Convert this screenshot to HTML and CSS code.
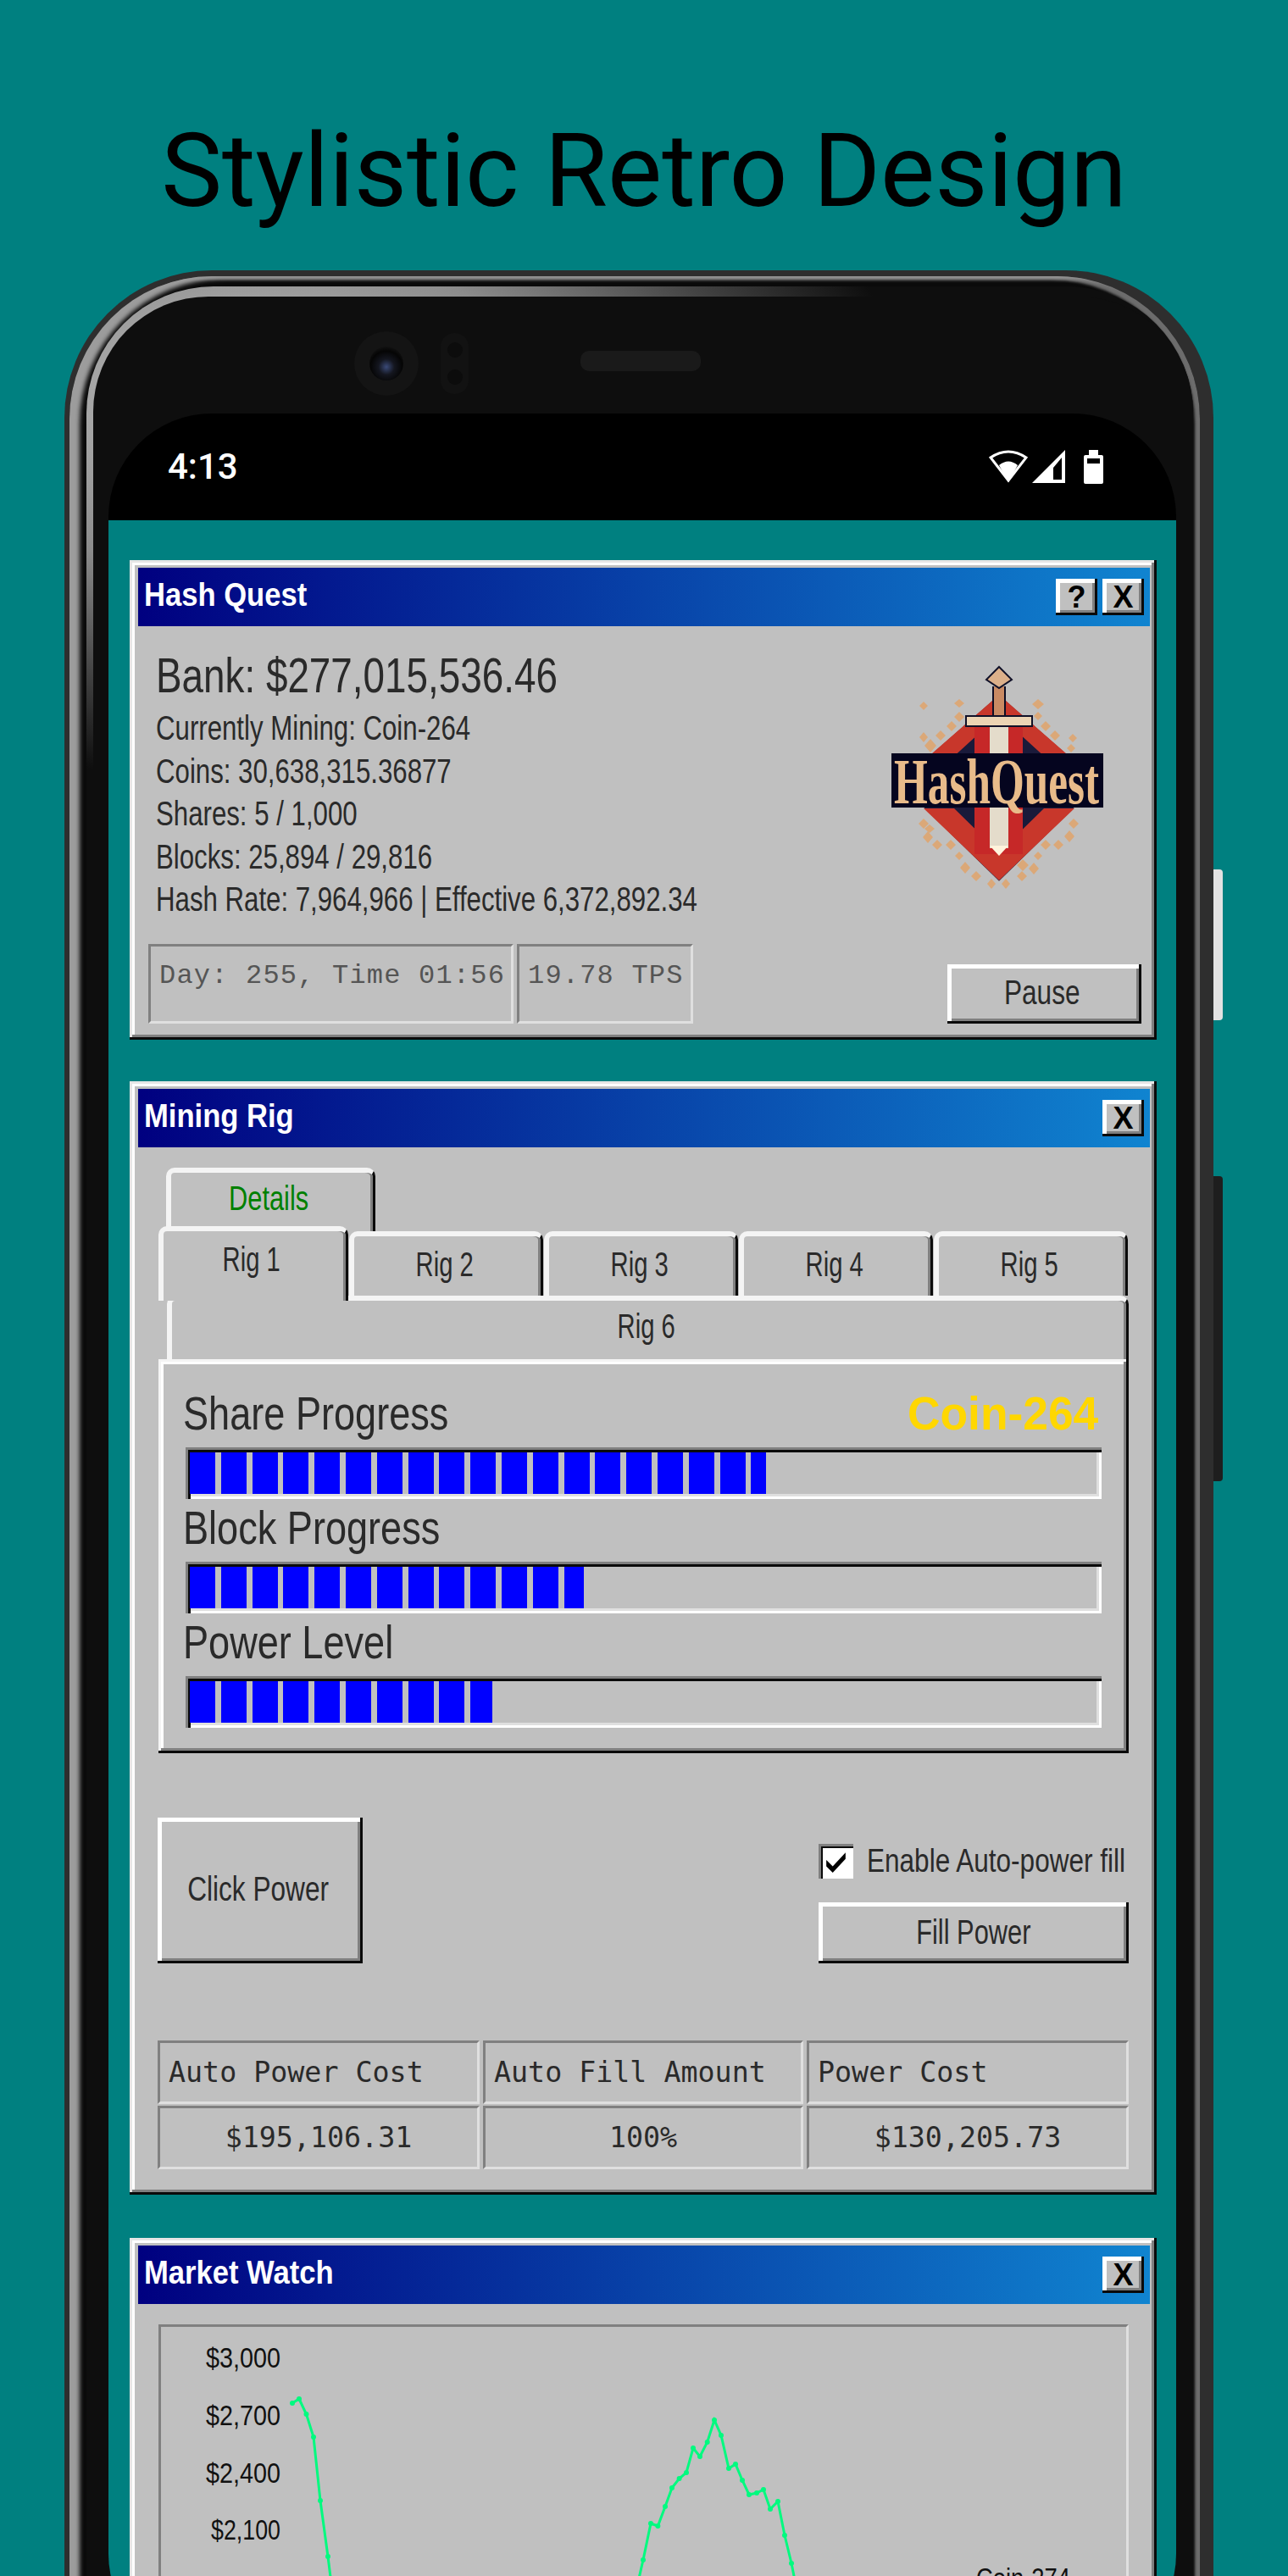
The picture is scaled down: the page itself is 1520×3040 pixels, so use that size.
FILE: index.html
```html
<!DOCTYPE html>
<html>
<head>
  <meta charset="UTF-8">
  <title>Hash Quest</title>
  <link rel="stylesheet" href="styles.css">
</head>
<body>
  <h1 class="headline">Stylistic Retro Design</h1>

  <div class="phone">
    <div class="side-btn power"></div>
    <div class="side-btn volume"></div>
    <div class="rim">
      <div class="lip">
        <div class="bezel">
          <div class="sensors">
            <div class="camera"><div class="lens"></div></div>
            <div class="prox"><span></span><span></span></div>
            <div class="speaker"></div>
          </div>

          <div class="statusbar">
            <span class="clock">4:13</span>
            <div class="status-icons">
              <svg class="ic-wifi" width="46" height="39" viewBox="0 0 46 39">
                <path d="M23 36 L2 9 Q23 -5 44 9 Z" fill="none" stroke="#fff" stroke-width="3"/>
                <path d="M23 38 L12 18 Q23 9 34 18 Z" fill="#fff"/>
              </svg>
              <svg class="ic-signal" width="39" height="39" viewBox="0 0 39 39">
                <path fill-rule="evenodd" d="M0 39 L39 0 V39 Z M25 35 H35 V9 L25 21 Z" fill="#fff"/>
              </svg>
              <svg class="ic-battery" width="23" height="40" viewBox="0 0 23 40">
                <path fill-rule="evenodd" d="M6 0 H17 V6 H21 Q23 6 23 8 V38 Q23 40 21 40 H2 Q0 40 0 38 V8 Q0 6 2 6 H6 Z M4 10 V16 H19 V10 Z" fill="#fff"/>
              </svg>
            </div>
          </div>

          <div class="screen">
            <!-- Hash Quest -->
            <div class="window win-quest">
              <div class="titlebar">
                <span class="title-text">Hash Quest</span>
                <div class="title-btns">
                  <button class="btn title-btn">?</button>
                  <button class="btn title-btn">X</button>
                </div>
              </div>
              <div class="quest-body">
                <div class="quest-top">
                  <div class="stats">
                    <div class="bank"><span class="nar">Bank: $277,015,536.46</span></div>
                    <div class="stat"><span class="nar">Currently Mining: Coin-264</span></div>
                    <div class="stat"><span class="nar">Coins: 30,638,315.36877</span></div>
                    <div class="stat"><span class="nar">Shares: 5 / 1,000</span></div>
                    <div class="stat"><span class="nar">Blocks: 25,894 / 29,816</span></div>
                    <div class="stat"><span class="nar">Hash Rate: 7,964,966 | Effective 6,372,892.34</span></div>
                  </div>
                  <svg class="logo" width="260" height="268" viewBox="70 45 260 268">
                    <g fill="#dba878">
                      <path d="M110 88l5 5-5 5-5-5z"/><path d="M152 85l6 5-6 5-6-5z"/><path d="M245 85l7 6-7 6-7-6z"/>
                      <path d="M245 100l5 5-5 5-5-5z"/><path d="M152 100l6 6-6 6-6-6z"/><path d="M143 111l6 6-6 6-6-6z"/>
                      <path d="M254 111l6 6-6 6-6-6z"/><path d="M130 122l6 6-6 6-6-6z"/><path d="M265 122l6 6-6 6-6-6z"/>
                      <path d="M110 124l5 6-5 6-5-6z"/><path d="M118 132l7 8-7 8-7-8z"/><path d="M286 126l5 5-5 5-5-5z"/>
                      <path d="M284 138l5 5-5 5-5-5z"/><path d="M110 226l6 6-6 6-6-6z"/><path d="M117 233l6 5-6 5-6-5z"/>
                      <path d="M115 241l6 7-6 7-6-7z"/><path d="M126 251l6 6-6 6-6-6z"/><path d="M142 251l6 6-6 6-6-6z"/>
                      <path d="M287 226l6 6-6 6-6-6z"/><path d="M282 240l6 7-6 7-6-7z"/><path d="M269 251l6 6-6 6-6-6z"/>
                      <path d="M254 251l6 6-6 6-6-6z"/><path d="M152 265l5 5-5 5-5-5z"/><path d="M245 265l5 5-5 5-5-5z"/>
                      <path d="M159 277l6 7-6 7-6-7z"/><path d="M227 274l7 7-7 7-7-7z"/><path d="M240 278l6 7-6 7-6-7z"/>
                      <path d="M172 288l6 6-6 6-6-6z"/><path d="M226 288l6 6-6 6-6-6z"/><path d="M190 297l5 6-5 6-5-6z"/><path d="M207 297l5 6-5 6-5-6z"/>
                    </g>
                    <path d="M199 78 L290 158 L290 213 L199 302 L108 213 L108 158 Z" fill="#1a1a3a" transform="translate(199 190) scale(.98) translate(-199 -190)"/>
                    <path d="M199 80 L286 156 H256 L199 104 L142 156 H112 Z" fill="#c8372b"/>
                    <path d="M110 214 H146 L199 266 L252 214 H288 L199 299 Z" fill="#c8372b"/>
                    <rect x="170" y="118" width="57" height="150" fill="#c62828"/>
                    <rect x="188" y="116" width="22" height="145" fill="#e4dccb"/>
                    <path d="M188 258 H210 L199 270 Z" fill="#fff3dc"/>
                    <rect x="191" y="70" width="16" height="37" fill="#0d0d24"/>
                    <rect x="193" y="70" width="12" height="36" fill="#c98a63"/>
                    <path d="M199 47 L214 62 L199 72 L184 62 Z" fill="#dcb08a" stroke="#111128" stroke-width="2"/>
                    <rect x="160" y="105" width="78" height="12" fill="#ecd4b4" stroke="#111128" stroke-width="2"/>
                    <rect x="72" y="149" width="250" height="64" fill="#05051f"/>
                    <text class="logo-text" x="75" y="208" textLength="242" lengthAdjust="spacingAndGlyphs">HashQuest</text>
                  </svg>
                </div>
                <div class="quest-bottom">
                  <div class="clock-box day">Day: 255, Time 01:56</div>
                  <div class="clock-box tps">19.78 TPS</div>
                  <button class="btn pause"><span class="nar-c">Pause</span></button>
                </div>
              </div>
            </div>

            <!-- Mining Rig -->
            <div class="window win-rig">
              <div class="titlebar">
                <span class="title-text">Mining Rig</span>
                <div class="title-btns">
                  <button class="btn title-btn">X</button>
                </div>
              </div>
              <div class="rig-body">
                <div class="tab tab-details"><span class="nar-c">Details</span></div>
                <div class="tab-row">
                  <div class="tab tab-active"><span class="nar-c">Rig 1</span></div>
                  <div class="tab"><span class="nar-c">Rig 2</span></div>
                  <div class="tab"><span class="nar-c">Rig 3</span></div>
                  <div class="tab"><span class="nar-c">Rig 4</span></div>
                  <div class="tab"><span class="nar-c">Rig 5</span></div>
                </div>
                <div class="tab tab-wide"><span class="nar-c">Rig 6</span></div>

                <div class="rig-panel">
                  <div class="bar-label"><span class="nar">Share Progress</span><span class="coin">Coin-264</span></div>
                  <div class="bar"><div class="bar-fill" style="width: 680px"></div></div>
                  <div class="bar-label"><span class="nar">Block Progress</span></div>
                  <div class="bar"><div class="bar-fill" style="width: 465px"></div></div>
                  <div class="bar-label"><span class="nar">Power Level</span></div>
                  <div class="bar"><div class="bar-fill" style="width: 357px"></div></div>
                </div>

                <div class="power-row">
                  <button class="btn click-power"><span class="nar-c">Click Power</span></button>
                  <div class="power-side">
                    <label class="check-row">
                      <span class="checkbox">
                        <svg width="27" height="27" viewBox="0 0 25 25"><path d="M2 11 L9 18 L23 3 V10 L9 25 L2 18 Z" fill="#000"/></svg>
                      </span>
                      <span class="nar check-text">Enable Auto-power fill</span>
                    </label>
                    <button class="btn fill-power"><span class="nar-c">Fill Power</span></button>
                  </div>
                </div>

                <div class="cost-table">
                  <div class="cost-cell head">Auto Power Cost</div>
                  <div class="cost-cell head">Auto Fill Amount</div>
                  <div class="cost-cell head">Power Cost</div>
                  <div class="cost-cell">$195,106.31</div>
                  <div class="cost-cell">100%</div>
                  <div class="cost-cell">$130,205.73</div>
                </div>
              </div>
            </div>

            <!-- Market Watch -->
            <div class="window market">
              <div class="titlebar">
                <span class="title-text">Market Watch</span>
                <div class="title-btns">
                  <button class="btn title-btn">X</button>
                </div>
              </div>
              <div class="market-body">
                <div class="chart-box">
                  <svg class="chart" width="1139" height="420" viewBox="0 0 1139 420">
                    <defs>
                      <marker id="dot" markerUnits="userSpaceOnUse" markerWidth="8" markerHeight="8" refX="4" refY="4">
                        <circle cx="4" cy="4" r="3" fill="#00fa7f"/>
                      </marker>
                    </defs>
                    <g class="axis">
                      <text x="141" y="48" textLength="88" lengthAdjust="spacingAndGlyphs">$3,000</text>
                      <text x="141" y="116" textLength="88" lengthAdjust="spacingAndGlyphs">$2,700</text>
                      <text x="141" y="184" textLength="88" lengthAdjust="spacingAndGlyphs">$2,400</text>
                      <text x="141" y="251" textLength="82" lengthAdjust="spacingAndGlyphs">$2,100</text>
                      <text x="141" y="319" textLength="88" lengthAdjust="spacingAndGlyphs">$1,800</text>
                    </g>
                    <polyline class="price" points="155,90 163,85 171.5,103 180,130 188,205 197,271 206,344 560.5,312 569,275 578,232 586.4,235 595,212 603,190 611.6,179 620,172 628,143 636,153 644.7,136 653,110 661,128 670,167 678,162 686,181 694,198 703,196 711,192 719,215 728,206 736,246 744,279 753,324"/>
                    <text class="legend" x="962" y="308" textLength="111" lengthAdjust="spacingAndGlyphs">Coin-274</text>
                  </svg>
                </div>
              </div>
            </div>
          </div>
        </div>
      </div>
    </div>
  </div>
</body>
</html>
```

FILE: styles.css
```css
html, body {
  margin: 0;
  height: 3040px;
  overflow: hidden;
}
body {
  background-color: #008080;
  font-family: "Liberation Sans", sans-serif;
  color: #2a2a2a;
}
button {
  font-family: inherit;
  color: #2a2a2a;
  border: none;
  padding: 0;
}

.nar, .nar-c {
  display: inline-block;
  white-space: nowrap;
  transform: scaleX(.79);
}
.nar { transform-origin: left center; }
.nar-c { transform-origin: center center; }

/* headline */
.headline {
  margin: 0;
  height: 319px;
  box-sizing: border-box;
  padding-top: 130px;
  text-align: center;
  font-family: Roboto, sans-serif;
  font-weight: 400;
  font-size: 121px;
  line-height: 145px;
  color: #000;
}

/* phone frame */
.phone {
  position: relative;
  margin-left: 76px;
  width: 1356px;
  box-sizing: border-box;
  padding: 7px 16px 0 6px;
  background-color: #2e2e2e;
  border-radius: 174px 174px 0 0;
}
.side-btn {
  position: absolute;
  left: 1356px;
  width: 11px;
  border-radius: 0 4px 4px 0;
}
.side-btn.power {
  top: 707px;
  height: 178px;
  background-color: #e2e2e2;
}
.side-btn.volume {
  top: 1069px;
  height: 360px;
  background-color: #1e1e1e;
}
.rim {
  padding: 12px 8px 0 20px;
  background-color: #0a0a0a;
  border-radius: 168px 168px 0 0;
  box-shadow: inset 15px 6px 5px -3px #9c9c9c, inset -8px 6px 3px -2px #6c6c6c;
}
.lip {
  padding: 12px 0 0 8px;
  border-radius: 150px 150px 0 0;
  background: radial-gradient(ellipse 780px 440px at 14% 5%, #c0c0c0, #8c8c8c 45%, #444 75%, #0e0e0e 100%);
}
.bezel {
  padding: 0 20px 0 18px;
  background-color: #0e0e0e;
  border-radius: 136px 136px 0 0;
  height: 2800px;
}

/* camera and speaker */
.sensors {
  height: 138px;
  box-sizing: border-box;
  display: flex;
  align-items: center;
  padding: 20px 0 0 290px;
}
.camera {
  width: 76px;
  height: 76px;
  border-radius: 50%;
  background-color: #141414;
  display: flex;
  align-items: center;
  justify-content: center;
}
.lens {
  width: 40px;
  height: 40px;
  border-radius: 50%;
  background: radial-gradient(circle at 50% 60%, #3a4a78 0, #14161f 30%, #050505 60%, #222 100%);
}
.prox {
  margin-left: 26px;
  width: 33px;
  height: 72px;
  border-radius: 16px;
  background-color: #121212;
  display: flex;
  flex-direction: column;
  align-items: center;
  justify-content: space-around;
  padding: 4px 0;
  box-sizing: border-box;
}
.prox span {
  width: 18px;
  height: 18px;
  border-radius: 50%;
  background-color: #0c0c0c;
}
.speaker {
  margin: 0 0 6px 132px;
  width: 142px;
  height: 24px;
  border-radius: 10px;
  background-color: #1a1a1a;
}

/* status bar */
.statusbar {
  height: 126px;
  background-color: #000;
  border-radius: 122px 122px 0 0;
  color: #fff;
  display: flex;
  justify-content: space-between;
  padding: 38px 86px 0 70px;
  box-sizing: border-box;
}
.clock {
  font-family: Roboto, sans-serif;
  font-weight: 500;
  font-size: 42px;
  line-height: 50px;
  height: 50px;
}
.status-icons {
  display: flex;
  align-items: flex-start;
  padding-top: 5px;
}
.ic-signal { margin-left: 5px; }
.ic-battery { margin-left: 22px; }

/* screen */
.screen {
  background-color: #008080;
  height: 2520px;
  box-sizing: border-box;
  border-radius: 0 0 120px 120px;
  padding: 47px 23px 0 25px;
}

/* windows */
.window {
  background-color: #c0c0c0;
  padding: 9px 8px 9px 10px;
  box-shadow: inset -3px -3px #0a0a0a, inset 3px 3px #e6e6e6, inset -6px -6px #808080, inset 6px 6px #fff;
}
.win-quest { margin-bottom: 49px; }
.win-rig { margin-bottom: 51px; }
.titlebar {
  height: 69px;
  background: linear-gradient(90deg, #000080, #1084d0);
  display: flex;
  align-items: center;
  justify-content: space-between;
  padding: 0 7px 0 7px;
}
.title-text {
  display: inline-block;
  margin-bottom: 4px;
  color: #fff;
  font-weight: bold;
  font-size: 38px;
  white-space: nowrap;
  transform: scaleX(.91);
  transform-origin: left center;
}
.title-btns {
  display: flex;
  gap: 6px;
}
.btn {
  background-color: #c0c0c0;
  box-shadow: inset -3px -3px #0a0a0a, inset 5px 5px #fff, inset -6px -6px #808080;
}
.title-btn {
  width: 49px;
  height: 43px;
  font-weight: bold;
  font-size: 36px;
  line-height: 40px;
  color: #000;
}

/* hash quest */
.quest-body {
  padding: 0 10px 10px 12px;
}
.quest-top {
  display: flex;
  justify-content: space-between;
  height: 375px;
}
.stats {
  padding: 24px 0 0 9px;
  white-space: nowrap;
}
.bank {
  font-size: 58px;
  line-height: 68px;
  margin-bottom: 3px;
}
.stat {
  font-size: 40px;
  line-height: 50.5px;
}
.stat .nar { transform: scaleX(.78); }
.logo {
  margin: 46px 37px 0 0;
  flex-shrink: 0;
}
.logo-text {
  font-family: "Liberation Serif", serif;
  font-weight: bold;
  font-size: 76px;
  fill: #e8bb8a;
}
.quest-bottom {
  display: flex;
  align-items: flex-end;
  height: 94px;
}
.clock-box {
  height: 94px;
  box-sizing: border-box;
  padding: 17px 0 0 10px;
  font-family: "Liberation Mono", monospace;
  font-size: 32px;
  line-height: 36px;
  letter-spacing: 1.2px;
  color: #555;
  border-top: 3px solid #808080;
  border-left: 3px solid #808080;
  border-right: 3px solid #dfdfdf;
  border-bottom: 3px solid #dfdfdf;
  white-space: nowrap;
}
.day { width: 431px; margin-right: 4px; }
.tps { width: 208px; }
.pause {
  margin-left: auto;
  width: 229px;
  height: 70px;
  padding: 0 6px 4px 0;
  font-size: 40px;
}

/* mining rig */
.rig-body {
  padding: 24px 25px 21px 24px;
}
.tab {
  box-sizing: border-box;
  background-color: #c0c0c0;
  border-top: 6px solid #f4f4f4;
  border-left: 6px solid #f4f4f4;
  border-right: 3px solid #0a0a0a;
  border-radius: 10px 10px 0 0;
  box-shadow: inset -3px 0 #808080;
  height: 76px;
  padding-right: 7px;
  font-size: 40px;
  line-height: 66px;
  text-align: center;
}
.tab .nar-c { transform: scaleX(.73); }
.tab-details {
  margin-left: 9px;
  width: 247px;
  height: 75px;
  color: #008000;
  line-height: 60px;
}
.tab-details .nar-c { transform: scaleX(.77); }
.tab-row {
  display: flex;
  align-items: flex-start;
  height: 76px;
}
.tab-row .tab {
  width: 229px;
  margin-left: 1px;
}
.tab-row .tab-active {
  position: relative;
  z-index: 1;
  width: 224px;
  height: 88px;
  margin: -6px 0 0 0;
}
.tab-wide {
  margin-left: 10px;
  height: 75px;
  line-height: 60px;
}
.rig-panel {
  position: relative;
  z-index: 2;
  height: 465px;
  box-sizing: border-box;
  padding: 30px 32px 30px 29px;
  background-color: #c0c0c0;
  box-shadow: inset -3px -3px #0a0a0a, inset 3px 3px #f4f4f4, inset -6px -6px #808080, inset 6px 6px #fff;
}
.bar-label {
  height: 74px;
  box-sizing: border-box;
  padding-top: 3px;
  font-size: 55px;
  line-height: 62px;
  display: flex;
  justify-content: space-between;
  padding-right: 4px;
}
.bar-label .nar { transform: scaleX(.82); }
.coin {
  display: inline-block;
  font-weight: bold;
  color: #ffd700;
  transform: scaleX(.97);
  transform-origin: right center;
}
.bar {
  margin-left: 3px;
  height: 61px;
  box-sizing: border-box;
  padding: 6px 9px 6px 5px;
  box-shadow: inset 3px 3px #808080, inset 6px 6px #0a0a0a, inset -3px -3px #fff, inset -6px -6px #dfdfdf;
}
.bar-fill {
  height: 49px;
  background: repeating-linear-gradient(90deg, #0000ff 0, #0000ff 30px, #c0c0c0 30px, #c0c0c0 36.8px);
}
.power-row {
  margin-top: 76px;
  display: flex;
  justify-content: space-between;
  height: 172px;
  margin-left: -1px;
}
.click-power {
  width: 242px;
  height: 172px;
  padding: 0 4px 4px 0;
  font-size: 40px;
}
.power-side {
  width: 366px;
  display: flex;
  flex-direction: column;
  justify-content: space-between;
}
.check-row {
  display: flex;
  align-items: center;
  margin-top: 30px;
  font-size: 38px;
  white-space: nowrap;
}
.check-text { transform: scaleX(.83); }
.checkbox {
  flex-shrink: 0;
  width: 41px;
  height: 41px;
  box-sizing: border-box;
  margin-right: 16px;
  background-color: #fff;
  box-shadow: inset 3px 3px #808080, inset 5px 5px #0a0a0a, inset -3px -3px #fff;
  display: flex;
  align-items: center;
  justify-content: center;
}
.fill-power {
  height: 72px;
  padding-bottom: 2px;
  font-size: 40px;
}
.fill-power .nar-c { transform: scaleX(.77); }
.cost-table {
  margin: 91px 0 0 -1px;
  display: grid;
  grid-template-columns: 380px 378px 380px;
  grid-auto-rows: 75px;
  gap: 2px 4px;
}
.cost-cell {
  box-sizing: border-box;
  border-top: 3px solid #808080;
  border-left: 3px solid #808080;
  border-right: 3px solid #dfdfdf;
  border-bottom: 3px solid #dfdfdf;
  font-family: "DejaVu Sans Mono", monospace;
  font-size: 33.3px;
  line-height: 69px;
  text-align: center;
}
.cost-cell.head {
  text-align: left;
  padding-left: 10px;
}

/* market watch */
.market-body {
  padding: 24px 25px 0 24px;
}
.chart-box {
  height: 500px;
  box-sizing: border-box;
  border-top: 3px solid #808080;
  border-left: 3px solid #808080;
  border-right: 3px solid #dfdfdf;
  border-bottom: 3px solid #dfdfdf;
}
.chart {
  display: block;
}
.axis text {
  font-size: 34px;
  text-anchor: end;
  fill: #111;
}
.legend {
  font-size: 34px;
  fill: #111;
}
.price {
  fill: none;
  stroke: #00fa7f;
  stroke-width: 3;
  marker-start: url(#dot);
  marker-mid: url(#dot);
  marker-end: url(#dot);
}
```
